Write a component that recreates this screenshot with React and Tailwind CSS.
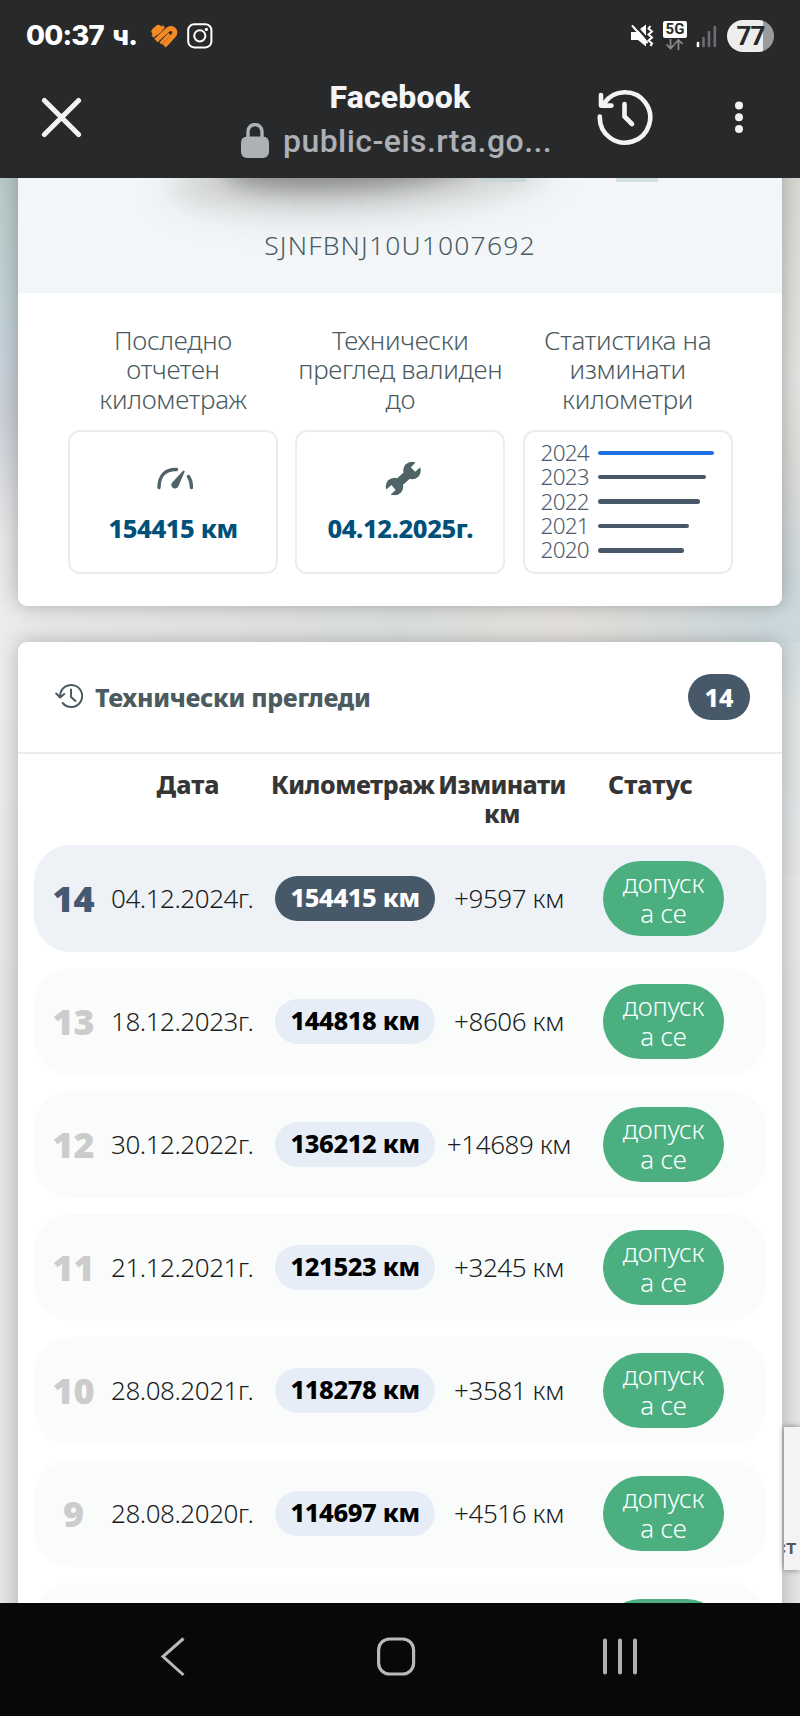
import React from "react";

const rows = [
  ["14", "04.12.2024г.", "154415 км", "+9597 км"],
  ["13", "18.12.2023г.", "144818 км", "+8606 км"],
  ["12", "30.12.2022г.", "136212 км", "+14689 км"],
  ["11", "21.12.2021г.", "121523 км", "+3245 км"],
  ["10", "28.08.2021г.", "118278 км", "+3581 км"],
  ["9", "28.08.2020г.", "114697 км", "+4516 км"],
];

const years = [
  ["2024", 116],
  ["2023", 108.5],
  ["2022", 102.5],
  ["2021", 91],
  ["2020", 86],
];

function Header() {
  return (
    <header className="relative z-10 flex h-[178px] w-full shrink-0 flex-col bg-[#27292b] font-['Roboto',sans-serif]">
      <div className="flex h-[71px] items-center pl-[26px] pr-[26px]">
        <span className="w-[125px] whitespace-nowrap font-['Inter',sans-serif] text-[27.500px] font-extrabold leading-none tracking-[-0.8px] text-white [word-spacing:3px]">00:37 ч.</span>
        <svg className="h-[24px] w-[28px]" viewBox="0 0 28 24" fill="none" stroke="#f58a25">
          <path d="M4.500 7.500 L7.500 5" strokeWidth="8" strokeLinecap="round" />
          <path d="M1.500 12.500 L13 2.500" strokeWidth="3" />
          <path d="M5 16.500 L16.500 6 C21 2 26.500 7 22.500 11.500 L13 21.800" strokeWidth="5" />
          <path d="M9.500 19.500 L18.500 10" strokeWidth="3" />
        </svg>
        <svg className="ml-[8px] h-[26px] w-[26px]" viewBox="0 0 26 26" fill="none" stroke="#fff">
          <rect x="1.2" y="1.2" width="23.2" height="23.2" rx="6" strokeWidth="2" />
          <circle cx="12.8" cy="12.8" r="5.6" strokeWidth="2" />
          <circle cx="19.4" cy="6.4" r="1.6" fill="#fff" stroke="none" />
        </svg>
        <div className="ml-auto flex items-center">
          <svg className="h-[24px] w-[24px]" viewBox="0 0 24 24">
            <path d="M1 8h5l10-7.5v22L8 16H1z" fill="#fff" />
            <path d="M4.500 0.500 L19 17" stroke="#27292b" strokeWidth="2.400" />
            <path d="M2.500 2 L17 18.500" stroke="#fff" strokeWidth="2" strokeLinecap="round" />
            <path d="M20.500 2 l-2 2.500 3.500 3 -3.500 3 3.500 3 -3.500 3 3.500 3 -1.500 2.500" stroke="#fff" strokeWidth="2" fill="none" />
          </svg>
          <div className="ml-[9px] flex h-[29px] w-[24px] flex-col items-center">
            <span className="flex h-[17px] w-[24px] items-center justify-center rounded-[2px] bg-white text-[15px] font-bold leading-none text-[#27292b]">5G</span>
            <svg className="mt-[1px] h-[11px] w-[20px]" viewBox="0 0 20 11" fill="none" stroke="#8c8d8e" strokeWidth="1.7">
              <path d="M5.500 0v9.500M1.500 5.500l4 4 4-4M13.500 11V1M9.500 5l4-4 4 4" />
            </svg>
          </div>
          <svg className="ml-[9px] h-[24px] w-[21px]" viewBox="0 0 21 24" strokeWidth="2.600" strokeLinecap="round">
            <path d="M2 19v3" stroke="#fff" />
            <path d="M7.500 14v8M13 8v14M18.800 3v19" stroke="#6c6d6e" />
          </svg>
          <div className="ml-[10px] flex h-[32px] w-[47px] items-center justify-center rounded-full bg-[linear-gradient(90deg,#ededed_0_36px,#9b9c9c_36px)] text-[26px] font-bold leading-none tracking-[-1px] text-[#27292b]">77</div>
        </div>
      </div>
      <div className="flex h-[107px] items-start">
        <svg className="ml-[41px] mt-[26px] h-[41px] w-[41px]" viewBox="0 0 41 41" stroke="#f3f3f5" strokeWidth="5" strokeLinecap="round">
          <path d="M3.400 3.400 37.600 37.600M37.600 3.400 3.400 37.600" />
        </svg>
        <div className="ml-[159px] flex w-[318px] flex-col items-center">
          <span className="mt-[5px] whitespace-nowrap text-[32px] font-extrabold leading-[42px] tracking-[0.2px] text-[#f5f5f7]">Facebook</span>
          <div className="mt-[2px] flex h-[42px] w-full items-center">
            <svg className="mt-[-1px] h-[35px] w-[28px]" viewBox="0 0 28 35">
              <path d="M7 16V8.500a7 7 0 0 1 14 0V16" fill="none" stroke="#adb0b4" strokeWidth="3.400" />
              <rect x="0" y="13.500" width="28" height="21.500" rx="6" fill="#adb0b4" />
            </svg>
            <span className="ml-[14px] whitespace-nowrap text-[32px] font-medium leading-[42px] tracking-[0.45px] text-[#adb0b4]">public-eis.rta.go...</span>
          </div>
        </div>
        <svg className="ml-[38px] mt-[16px] h-[60px] w-[60px]" viewBox="0 0 60 60" fill="none" stroke="#f3f3f5" strokeWidth="4.600" strokeLinecap="round" strokeLinejoin="round">
          <path d="M2.800 29.500A25.200 25.200 0 1 0 7 16.500" />
          <path d="M4 8v10.600h10.500M27.500 17v12.500l7.500 7.500" />
        </svg>
        <svg className="ml-[76.500px] mt-[28px] h-[36px] w-[10px]" viewBox="0 0 10 36" fill="#f3f3f5">
          <circle cx="5" cy="6.500" r="4" /><circle cx="5" cy="18.200" r="4" /><circle cx="5" cy="30" r="4" />
        </svg>
      </div>
    </header>
  );
}

function Stat({ lines, children }) {
  return (
    <div className="flex w-[210px] flex-col items-center">
      <div className="flex h-[98px] flex-col items-center pt-px text-[26px] font-light leading-[29.3px] tracking-[-0.3px] text-[#4b5b5f]">
        {lines.map((l) => (
          <span key={l} className="whitespace-nowrap">{l}</span>
        ))}
      </div>
      <div className="mt-[7px] flex h-[144px] w-full flex-col items-center rounded-[12px] border-2 border-[#ececec]">{children}</div>
    </div>
  );
}

function Summary() {
  return (
    <section className="relative mx-[18px] flex h-[427.500px] shrink-0 flex-col overflow-hidden rounded-b-[9px] bg-white">
      <div className="relative flex h-[115px] shrink-0 justify-center overflow-hidden bg-[#f3f6f8]">
        <div className="absolute left-[205px] top-[-38px] h-[48px] w-[250px] rotate-[-3deg] rounded-[50%] bg-[#404244]/70 blur-[12px]" />
        <div className="absolute left-[150px] top-[-40px] h-[76px] w-[380px] rotate-[-3deg] rounded-[50%] bg-[#9a9b9c]/40 blur-[16px]" />
        <div className="absolute left-[462px] top-0 h-[4px] w-[46px] bg-[#bccfd1]/60" />
        <div className="absolute left-[598px] top-0 h-[4px] w-[42px] bg-[#d3e0e2]" />
        <span className="relative mt-[49px] text-[26.500px] font-light leading-[36px] tracking-[1.15px] text-[#4b5b5f]">SJNFBNJ10U1007692</span>
      </div>
      <div className="mt-[32px] flex gap-[17.300px] pl-[50px]">
        <Stat lines={["Последно", "отчетен", "километраж"]}>
          <svg className="mt-[35px] h-[24px] w-[36px] translate-x-[2px]" viewBox="0 0 36 24" fill="none" stroke="#506366" strokeWidth="3.400" strokeLinecap="round">
            <path d="M2 20.500C2 8 9 2 19.500 2.500M31.500 9.500q3 4.500 3 11" />
            <path d="M27 4 L20.500 19a2.800 2.800 0 0 1-5-2.500z" fill="#506366" strokeWidth="1.800" />
          </svg>
          <span className="mt-[19px] whitespace-nowrap text-[25.500px] font-extrabold leading-[36px] tracking-[-0.4px] text-[#00507a]">154415 км</span>
        </Stat>
        <Stat lines={["Технически", "преглед валиден", "до"]}>
          <svg className="mt-[29px] h-[36px] w-[36px] translate-x-[3px]" viewBox="0 0 36 36">
            <path d="M10 25 27 10" stroke="#506366" strokeWidth="9" />
            <circle cx="27" cy="9.500" r="8.800" fill="#506366" />
            <circle cx="9.500" cy="25.500" r="8.800" fill="#506366" />
            <path d="M28 8.500 38-1M8.500 26.500-2 36" stroke="#fff" strokeWidth="6.500" strokeLinejoin="round" />
          </svg>
          <span className="mt-[13px] whitespace-nowrap text-[25.500px] font-extrabold leading-[36px] tracking-[-0.4px] text-[#00507a]">04.12.2025г.</span>
        </Stat>
        <Stat lines={["Статистика на", "изминати", "километри"]}>
          <div className="mt-[8.600px] flex w-full flex-col pl-[16px]">
            {years.map(([y, w]) => (
              <div key={y} className="flex h-[24.400px] items-center">
                <span className="w-[57px] text-[22.500px] font-light leading-[24px] tracking-[-0.8px] text-[#4f5b68]">{y}</span>
                <span className={y === "2024" ? "h-[4.500px] rounded-full bg-[#1f6fe0]" : "h-[4.500px] rounded-full bg-[#485869]"} style={{ width: w }} />
              </div>
            ))}
          </div>
        </Stat>
      </div>
    </section>
  );
}

function Row({ row }) {
  const [n, date, km, diff] = row;
  const on = n === "14";
  return (
    <div className={"flex h-[107px] shrink-0 items-center rounded-[36px] " + (on ? "bg-[#eef2f7]" : "bg-[#fafcfb]")}>
      <span className={"flex w-[77px] justify-center whitespace-nowrap pl-[2px] text-[36px] font-black leading-none " + (on ? "text-[#445a72]" : "text-[#cccccc]")}>{n}</span>
      <span className="w-[164px] whitespace-nowrap pb-[2px] text-[26px] font-light leading-none tracking-[-0.45px] text-[#1b1c1d]">{date}</span>
      <span className={"flex h-[45px] w-[160px] items-center justify-center whitespace-nowrap rounded-full pb-px text-[25.500px] font-extrabold leading-none tracking-[-0.4px] " + (on ? "bg-[#475869] text-white" : "bg-[#e7edf6] text-black")}>{km}</span>
      <span className="flex w-[148px] justify-center whitespace-nowrap pb-[2px] text-[26px] font-light leading-none tracking-[-0.4px] text-[#1b1c1d]">{diff}</span>
      <span className="ml-[20px] flex h-[75px] w-[121px] flex-col items-center justify-center rounded-full bg-[#4caf80] text-[26px] font-light leading-[29.300px] tracking-[-0.2px] text-white">
        <span>допуск</span>
        <span>а се</span>
      </span>
    </div>
  );
}

function Inspections() {
  return (
    <section className="relative mx-[18px] mt-[36.500px] flex h-[1200px] shrink-0 flex-col rounded-t-[9px] bg-white shadow-[0_0_22px_rgba(60,60,60,0.35)]">
      <div className="flex h-[112px] shrink-0 items-center border-b-2 border-[#ebebeb] pl-[37px] pr-[32px]">
        <svg className="mt-[-2px] h-[26px] w-[28px]" viewBox="0 0 28 26" fill="none" stroke="#4b5b5f" strokeWidth="2" strokeLinecap="round" strokeLinejoin="round">
          <path d="M5.200 13.500V12a11 11 0 1 1 2.500 8M1.200 10.500l4 4 4-3.500M16 6.500v7.500l4.500 4" />
        </svg>
        <span className="ml-[12px] whitespace-nowrap text-[25px] font-extrabold leading-none tracking-[-0.3px] text-[#4b5b5f]">Технически прегледи</span>
        <span className="ml-auto flex h-[46px] w-[62px] items-center justify-center rounded-full bg-[#475869] text-[25px] font-extrabold leading-none text-white">14</span>
      </div>
      <div className="flex h-[91px] shrink-0 pt-[16px] text-[25px] font-extrabold leading-[29.300px] text-[#353535]">
        <span className="ml-[119px] flex w-[102px] justify-center">Дата</span>
        <span className="ml-[32px] w-[168px] tracking-[-0.45px]">Километраж</span>
        <span className="flex w-[126px] flex-col items-center tracking-[-0.6px]"><span>Изминати</span><span>км</span></span>
        <span className="ml-[43px]">Статус</span>
      </div>
      <div className="flex flex-col gap-[16px] px-[16px]">
        {rows.map((r) => <Row key={r[0]} row={r} />)}
        <div className="flex h-[107px] shrink-0 items-center rounded-[36px] bg-[#fafcfb]">
          <span className="ml-[569px] h-[75px] w-[121px] rounded-full bg-[#4caf80]" />
        </div>
      </div>
    </section>
  );
}

export default function App() {
  return (
    <div className="relative flex h-[1716px] w-[800px] flex-col overflow-hidden bg-[#e6e7e9] font-['Noto_Sans',sans-serif]">
      <Header />
      <main className="relative flex h-[1425px] shrink-0 flex-col overflow-hidden bg-[linear-gradient(180deg,#b9cdc9_0px,#c4d3da_150px,#cdd1da_240px,#e9e9e9_360px,#efefef_500px,#e6e7e9_800px)]">
        <div className="absolute right-0 top-0 h-[700px] w-[60px] bg-[linear-gradient(180deg,#d9dcd4_0px,#e5e5e3_200px,#e1dfdc_270px,#cbd9de_430px,#dfe5e5_520px,#e6e7e9_700px)]" />
        <div className="absolute left-0 top-[427px] h-[37px] w-[800px] bg-[linear-gradient(90deg,#ececec,#e6e6e6_25%,#dde2e0_50%,#e7e4df_70%,#cbd9de_100%)]" />
        <div className="absolute left-[18px] top-[-30px] h-[457px] w-[764px] rounded-[9px] shadow-[0_0_22px_rgba(60,60,60,0.4)]" />
        <Summary />
        <Inspections />
        <div className="absolute left-[784px] top-[1249px] flex h-[143px] w-[16px] items-end overflow-hidden bg-[#f3f3f3] pb-[12px] shadow-[0_0_6px_rgba(0,0,0,0.45)]">
          <span className="ml-[-9px] font-['Roboto',sans-serif] text-[21px] font-medium leading-none text-[#55585a]">ст</span>
        </div>
      </main>
      <nav className="relative flex h-[113px] shrink-0 items-start bg-[#070808]">
        <svg className="ml-[160px] mt-[34px] h-[40px] w-[26px]" viewBox="0 0 26 40" fill="none" stroke="#b9b9b9" strokeWidth="3">
          <path d="M23.500 1.500 3 19.500 23.500 38" />
        </svg>
        <svg className="ml-[190px] mt-[34px] h-[40px] w-[40px]" viewBox="0 0 40 40" fill="none" stroke="#b9b9b9" strokeWidth="3.200">
          <rect x="2.600" y="2" width="35" height="35" rx="11" />
        </svg>
        <svg className="ml-[186px] mt-[34px] h-[40px] w-[38px]" viewBox="0 0 38 40" fill="none" stroke="#b0b0b0" strokeWidth="4" strokeLinecap="round">
          <path d="M3 3.500v32M18 3.500v32M33 3.500v32" />
        </svg>
      </nav>
    </div>
  );
}
